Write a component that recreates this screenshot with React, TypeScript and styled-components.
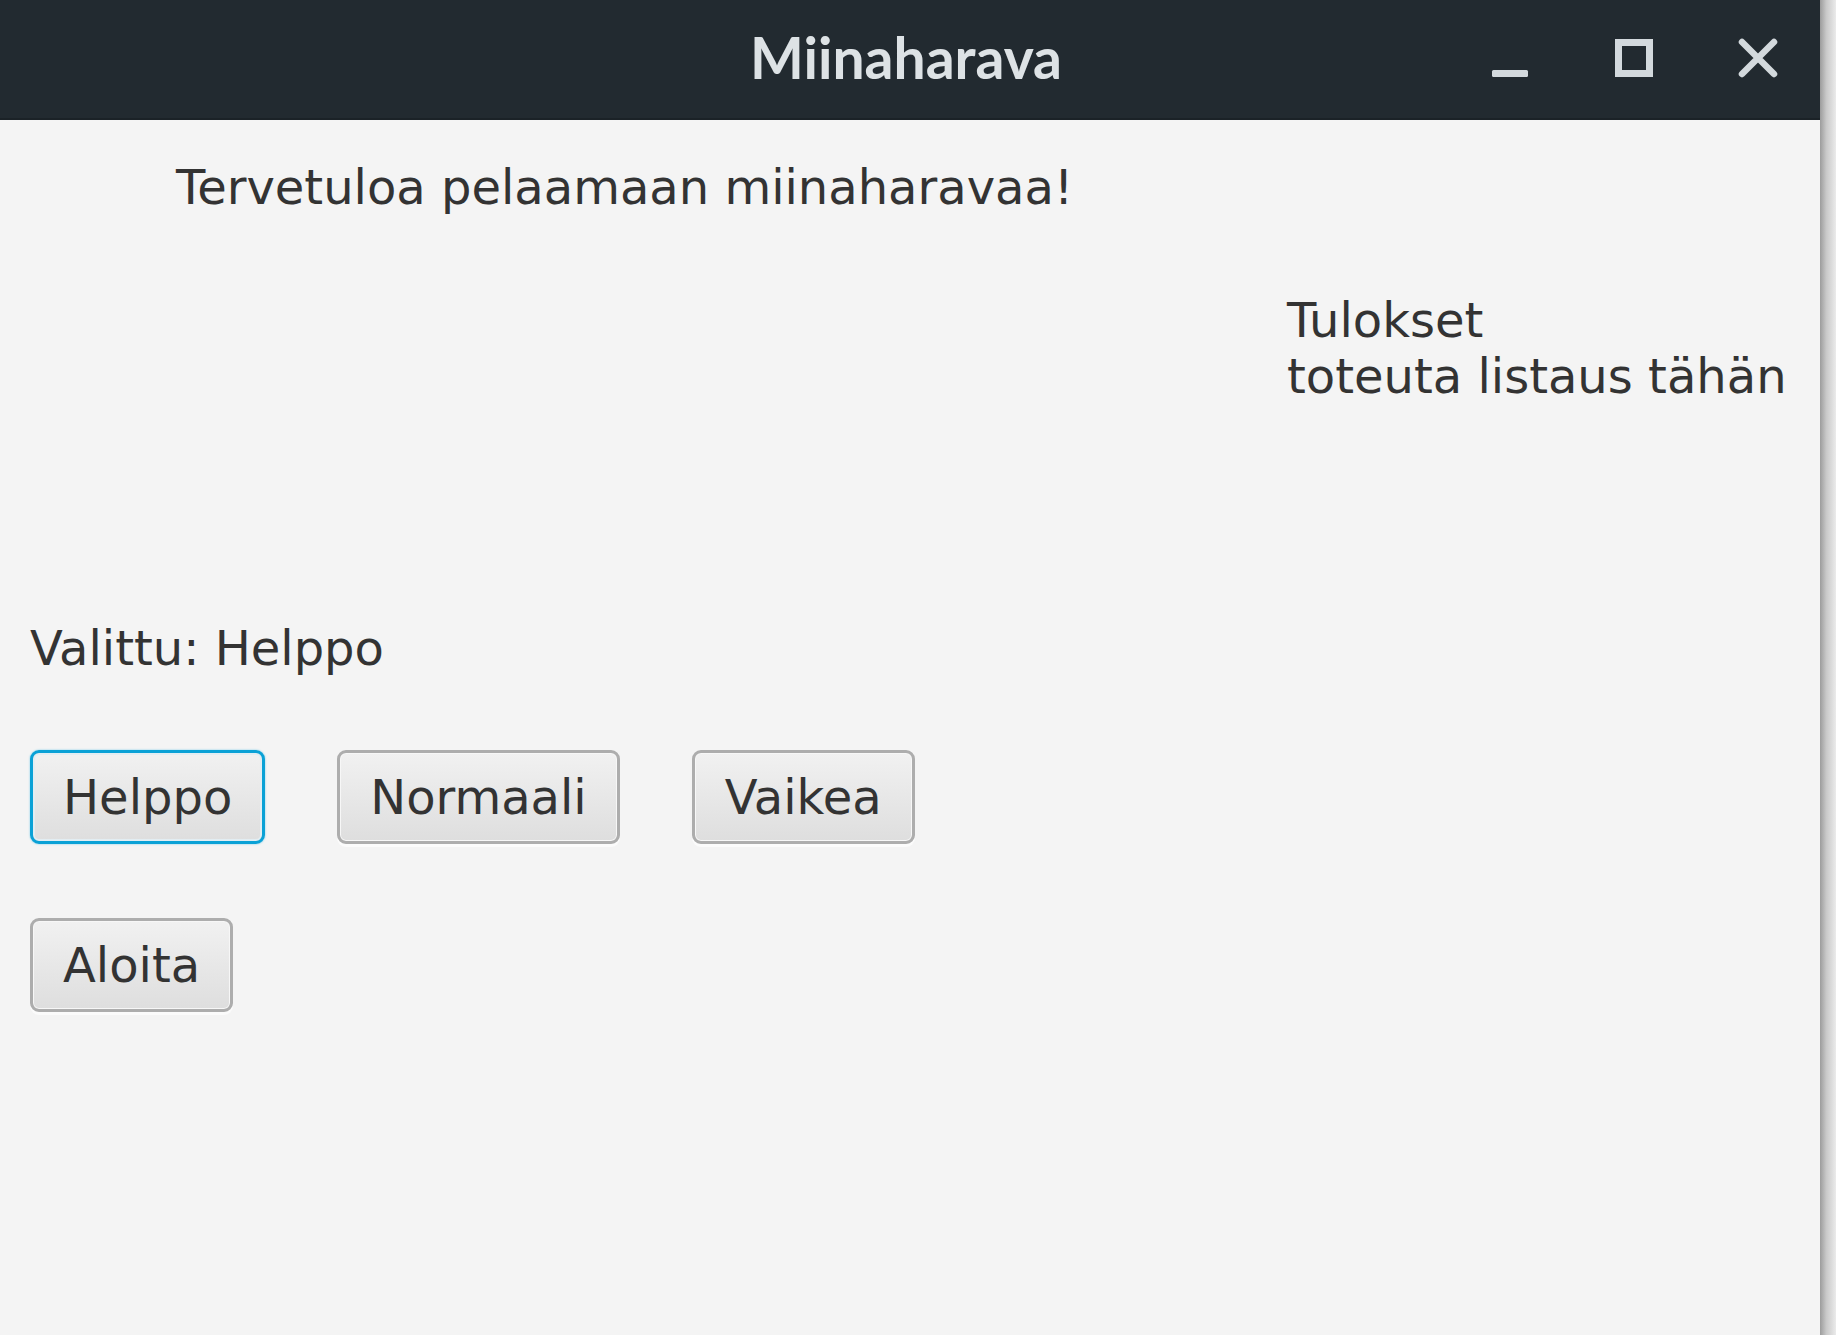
import styled, { createGlobalStyle } from "styled-components";

const GlobalStyle = createGlobalStyle`
    html, body {
        margin: 0;
        padding: 0;
        background: #e9e9e9;
    }
    #root {
        height: 1335px;
    }
`;

const StyledDesktop = styled.div`
    display: flex;
    height: 1335px;
    width: 1836px;
`;
const StyledShadow = styled.div`
    width: 16px;
    background: linear-gradient(to right, #9c9c9c, #c9c9c9 40%, #ebebeb);
`;
const StyledWindow = styled.div`
    width: 1820px;
    display: flex;
    flex-direction: column;
`;
const StyledTitleBar = styled.header`
    height: 120px;
    flex-shrink: 0;
    box-sizing: border-box;
    background-color: #222a30;
    border-bottom: 2px solid #1b2227;
    display: grid;
    grid-template-columns: 1fr auto 1fr;
    align-items: center;
`;
const StyledTitle = styled.h1`
    grid-column: 2;
    margin: 0 8px 4px 0;
    font-family: Lato, "Open Sans", sans-serif;
    font-weight: 700;
    font-size: 57px;
    color: #dde2e5;
`;
const StyledControls = styled.div`
    grid-column: 3;
    justify-self: end;
    display: flex;
    height: 100%;
`;
const StyledControl = styled.div`
    width: 124px;
    display: flex;
    align-items: center;
    justify-content: center;
    margin-top: -2px;
`;
const StyledContent = styled.main`
    flex: 1;
    background-color: #f4f4f4;
    font-family: "DejaVu Sans", Verdana, sans-serif;
    font-size: 48px;
    line-height: 55px;
    color: #333333;
`;
const StyledWelcome = styled.div`
    padding: 40px 0 0 176px;
`;
const StyledBody = styled.div`
    display: grid;
    grid-template-columns: 1fr auto;
`;
const StyledLeft = styled.div`
    padding: 406px 0 0 30px;
    display: flex;
    flex-direction: column;
    align-items: flex-start;
    gap: 74px;
`;
const StyledRow = styled.div`
    display: flex;
    gap: 72px;
`;
const StyledResults = styled.div`
    padding: 77px 30px 0 0;
    line-height: 56px;
    width: 503px;
`;
const StyledButton = styled.button<{ $focused?: boolean }>`
    box-sizing: border-box;
    height: 94px;
    padding: 0 30px;
    font-family: "DejaVu Sans", Verdana, sans-serif;
    font-size: 48px;
    color: #333333;
    border-radius: 9px;
    background: linear-gradient(to bottom, #f1f1f1, #dedede);
    border: ${({ $focused }) =>
        $focused ? "3px solid #0aa1d6" : "3px solid #adadad"};
    box-shadow: ${({ $focused }) =>
        $focused
            ? "inset 0 0 0 2px #e2edf2, 0 0 2px #6cc6e6"
            : "inset 0 0 0 1px #f7f7f7, 0 3px 0 #fbfbfb"};
    display: flex;
    align-items: center;
    cursor: pointer;
`;

const iconColor = "#d3d9dd";

const App = () => {
    return (
        <>
            <GlobalStyle />
            <StyledDesktop>
                <StyledWindow>
                    <StyledTitleBar>
                        <StyledTitle>Miinaharava</StyledTitle>
                        <StyledControls>
                            <StyledControl>
                                <svg width="38" height="40" viewBox="0 0 38 40">
                                    <rect x="1" y="32" width="36" height="7" rx="1.5" fill={iconColor} />
                                </svg>
                            </StyledControl>
                            <StyledControl>
                                <svg width="38" height="40" viewBox="0 0 38 40">
                                    <rect x="3.5" y="4.5" width="31" height="31" fill="none" stroke={iconColor} strokeWidth="7" />
                                </svg>
                            </StyledControl>
                            <StyledControl>
                                <svg width="40" height="40" viewBox="0 0 40 40">
                                    <path d="M4 4 L36 36 M36 4 L4 36" stroke={iconColor} strokeWidth="6.5" strokeLinecap="round" />
                                </svg>
                            </StyledControl>
                        </StyledControls>
                    </StyledTitleBar>
                    <StyledContent>
                        <StyledWelcome>Tervetuloa pelaamaan miinaharavaa!</StyledWelcome>
                        <StyledBody>
                            <StyledLeft>
                                <div>Valittu: Helppo</div>
                                <StyledRow>
                                    <StyledButton $focused>Helppo</StyledButton>
                                    <StyledButton>Normaali</StyledButton>
                                    <StyledButton>Vaikea</StyledButton>
                                </StyledRow>
                                <StyledButton>Aloita</StyledButton>
                            </StyledLeft>
                            <StyledResults>
                                <div>Tulokset</div>
                                <div>toteuta listaus tähän</div>
                            </StyledResults>
                        </StyledBody>
                    </StyledContent>
                </StyledWindow>
                <StyledShadow />
            </StyledDesktop>
        </>
    );
};

export default App;
